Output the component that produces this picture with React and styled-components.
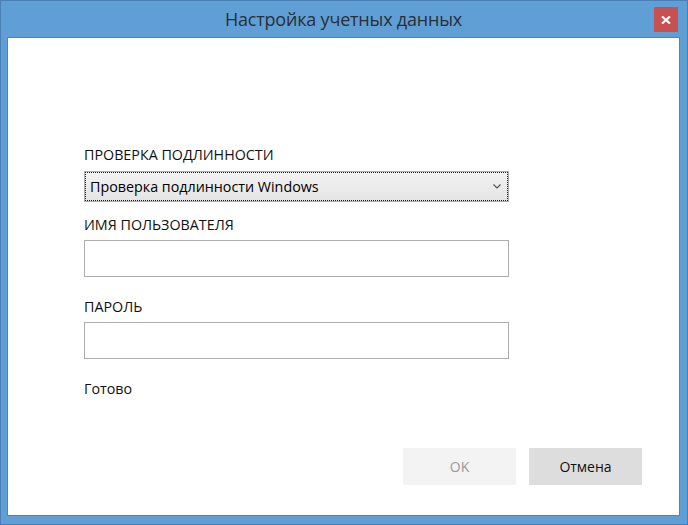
import React from "react";
import styled, { createGlobalStyle } from "styled-components";

const Global = createGlobalStyle`
  html, body { margin: 0; padding: 0; background: #ffffff; }
  * { box-sizing: border-box; }
  body { font-family: "Open Sans", "Noto Sans", sans-serif; }
`;

const Window = styled.div`
  width: 688px;
  height: 525px;
  border: 1px solid #4a80b4;
  background: #5f9fd6;
  display: flex;
  flex-direction: column;
  padding: 0 7px 8px 6px;
`;

const TitleBar = styled.div`
  height: 36px;
  display: grid;
  grid-template-columns: 1fr auto 1fr;
  align-items: start;
`;

const Title = styled.div`
  grid-column: 2;
  font-size: 18px;
  line-height: 36px;
  color: #2a2f36;
  letter-spacing: -0.2px;
`;

const CloseButton = styled.button`
  grid-column: 3;
  justify-self: end;
  margin-top: 6px;
  margin-right: 2px;
  width: 24px;
  height: 25px;
  border: none;
  padding: 0;
  background: #c75050;
  display: flex;
  align-items: center;
  justify-content: center;
`;

const Client = styled.div`
  flex: 1;
  background: #ffffff;
  border: 1px solid #4e85b8;
  display: flex;
  flex-direction: column;
  padding: 107px 37px 30px 76px;
`;

const Label = styled.div`
  font-size: 14.3px;
  line-height: 19px;
  color: #111;
  margin-top: ${(p) => p.$top || 0}px;
`;

const Select = styled.div`
  margin-top: 7px;
  width: 425px;
  height: 31px;
  border: 1px solid #acacac;
  background: linear-gradient(#f3f3f3, #e4e4e4);
`;

const SelectInner = styled.div`
  height: 100%;
  border: 1px dotted #1a1a1a;
  display: flex;
  align-items: center;
  justify-content: space-between;
  padding: 0 6px 0 4px;
  font-size: 14.3px;
  color: #000;
`;

const Input = styled.div`
  margin-top: 6px;
  width: 425px;
  height: 37px;
  border: 1px solid #abadb3;
  background: #fff;
`;

const Status = styled.div`
  font-size: 14.3px;
  line-height: 19px;
  color: #111;
  margin-top: 20px;
`;

const Footer = styled.div`
  margin-top: auto;
  display: flex;
  justify-content: flex-end;
  gap: 13px;
`;

const Button = styled.button`
  width: 113px;
  height: 37px;
  border: none;
  font-family: "Open Sans", "Noto Sans", sans-serif;
  font-size: 14px;
  background: ${(p) => (p.$disabled ? "#f3f3f3" : "#dddddd")};
  color: ${(p) => (p.$disabled ? "#9a9a9a" : "#111")};
`;

export default function App() {
  return (
    <>
      <Global />
      <Window>
        <TitleBar>
          <Title>Настройка учетных данных</Title>
          <CloseButton aria-label="Закрыть">
            <svg width="10" height="8" viewBox="0 0 10 8">
              <path d="M1 0.5 L9 7.5 M9 0.5 L1 7.5" stroke="#fff" strokeWidth="2.2" />
            </svg>
          </CloseButton>
        </TitleBar>
        <Client>
          <Label>ПРОВЕРКА ПОДЛИННОСТИ</Label>
          <Select>
            <SelectInner>
              <span>Проверка подлинности Windows</span>
              <svg width="8" height="5" viewBox="0 0 8 5">
                <path d="M0.5 0.5 L4 4 L7.5 0.5" stroke="#555" strokeWidth="1.2" fill="none" />
              </svg>
            </SelectInner>
          </Select>
          <Label $top={13}>ИМЯ ПОЛЬЗОВАТЕЛЯ</Label>
          <Input />
          <Label $top={20}>ПАРОЛЬ</Label>
          <Input />
          <Status>Готово</Status>
          <Footer>
            <Button $disabled>OK</Button>
            <Button>Отмена</Button>
          </Footer>
        </Client>
      </Window>
    </>
  );
}
